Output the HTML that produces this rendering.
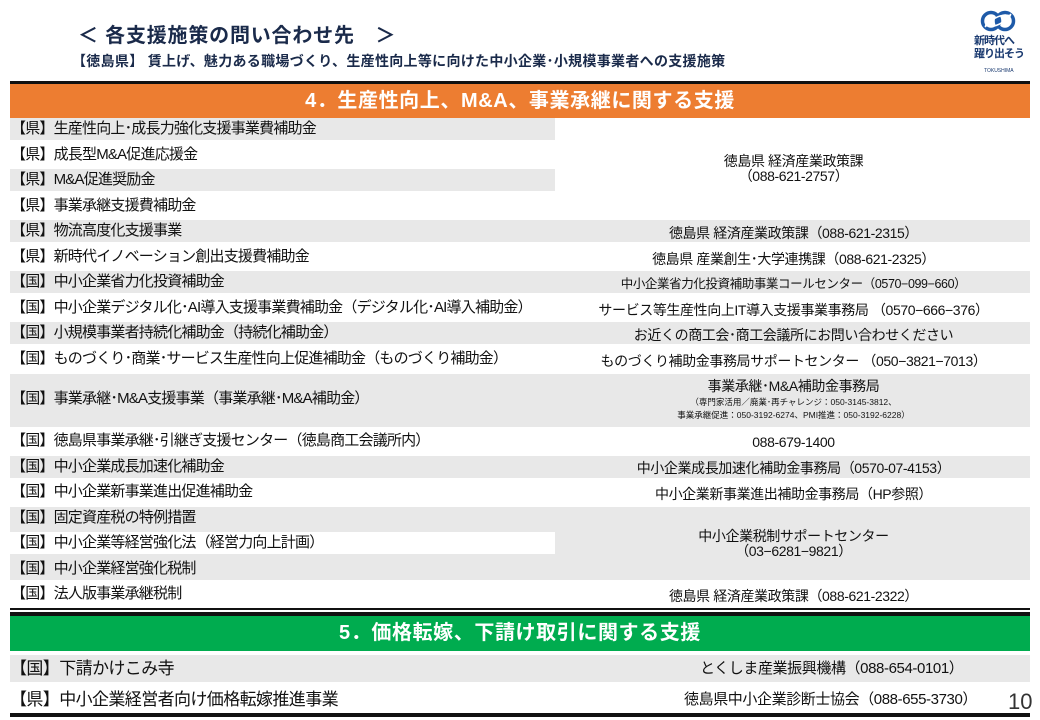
<!DOCTYPE html>
<html><head><meta charset="utf-8"><style>
*{margin:0;padding:0;box-sizing:border-box}
body{width:1040px;height:720px;background:#fff;position:relative;overflow:hidden;font-family:"Liberation Sans","Noto Sans CJK JP",sans-serif;color:#111}
.a{position:absolute}
.r{position:absolute;height:22px;line-height:22px;white-space:nowrap}
.l{left:10px;width:545px;font-size:15px;letter-spacing:-0.8px;padding-left:1px}
.rt{left:557px;width:473px;text-align:center;font-size:14px;letter-spacing:-0.4px}
.g{background:#e8e8e8}
.f{left:10px;width:1020px}
</style></head><body>
<div class="a" style="left:78px;top:19px;font-size:20px;font-weight:bold;color:#1a2a4a;letter-spacing:0.8px">＜ 各支援施策の問い合わせ先　＞</div>
<div class="a" style="left:72px;top:51px;font-size:14px;font-weight:bold;color:#1a2a4a;letter-spacing:0.3px">【徳島県】 賃上げ、魅力ある職場づくり、生産性向上等に向けた中小企業･小規模事業者への支援施策</div>
<svg class="a" style="left:980px;top:8px" width="36" height="26" viewBox="0 0 36 26"><g fill="none" stroke="#1e5aa8" stroke-width="3.5"><circle cx="11" cy="13" r="8.5"/><circle cx="25" cy="13" r="8.5"/></g><path d="M5 19 Q18 4 31 8" stroke="#fff" stroke-width="1.5" fill="none"/><path d="M5 17 Q18 22 31 6" stroke="#fff" stroke-width="1.5" fill="none"/></svg>
<div class="a" style="left:974px;top:35px;font-size:11px;font-weight:bold;color:#1a3a70;line-height:13px;letter-spacing:-1px">新時代へ<br>躍り出そう</div>
<div class="a" style="left:984px;top:68px;font-size:5px;color:#1a3a70">TOKUSHIMA</div>
<div class="a" style="left:10px;top:81px;width:1020px;height:3px;background:#111"></div>
<div class="a" style="left:10px;top:84px;width:1020px;height:34px;background:#ed7d31;color:#fff;font-size:20px;font-weight:bold;text-align:center;line-height:34px;letter-spacing:0.6px">4．生産性向上、M&amp;A、事業承継に関する支援</div>

<div class="r l g" style="top:118px">【県】生産性向上･成長力強化支援事業費補助金</div>
<div class="r l" style="top:143.5px">【県】成長型M&amp;A促進応援金</div>
<div class="r l g" style="top:169px">【県】M&amp;A促進奨励金</div>
<div class="r l" style="top:194.5px">【県】事業承継支援費補助金</div>
<div class="a rt" style="top:154px;font-size:14px;line-height:15px;white-space:nowrap">徳島県 経済産業政策課<br>（088-621-2757）</div>

<div class="r f g" style="top:220px"></div>
<div class="r l" style="top:220px">【県】物流高度化支援事業</div><div class="r rt" style="top:222px">徳島県 経済産業政策課（088-621-2315）</div>
<div class="r l" style="top:245.5px">【県】新時代イノベーション創出支援費補助金</div><div class="r rt" style="top:247.5px">徳島県 産業創生･大学連携課（088-621-2325）</div>
<div class="r f g" style="top:271px"></div>
<div class="r l" style="top:271px">【国】中小企業省力化投資補助金</div><div class="r rt" style="top:273px;font-size:12.5px">中小企業省力化投資補助事業コールセンター（0570−099−660）</div>
<div class="r l" style="top:296.5px">【国】中小企業デジタル化･AI導入支援事業費補助金（デジタル化･AI導入補助金）</div><div class="r rt" style="top:298.5px">サービス等生産性向上IT導入支援事業事務局 （0570−666−376）</div>
<div class="r f g" style="top:322px"></div>
<div class="r l" style="top:322px">【国】小規模事業者持続化補助金（持続化補助金）</div><div class="r rt" style="top:324px">お近くの商工会･商工会議所にお問い合わせください</div>
<div class="r l" style="top:347.5px">【国】ものづくり･商業･サービス生産性向上促進補助金（ものづくり補助金）</div><div class="r rt" style="top:349.5px">ものづくり補助金事務局サポートセンター （050−3821−7013）</div>

<div class="a g" style="left:10px;top:374px;width:1020px;height:53px"></div>
<div class="a l" style="top:388px;line-height:22px;white-space:nowrap">【国】事業承継･M&amp;A支援事業（事業承継･M&amp;A補助金）</div>
<div class="a rt" style="top:378px;white-space:nowrap;line-height:17px">事業承継･M&amp;A補助金事務局</div>
<div class="a rt" style="top:396px;white-space:nowrap;font-size:8.5px;line-height:13px;letter-spacing:0">（専門家活用／廃業･再チャレンジ：050-3145-3812、<br>事業承継促進：050-3192-6274、PMI推進：050-3192-6228）</div>

<div class="r l" style="top:430px">【国】徳島県事業承継･引継ぎ支援センター（徳島商工会議所内）</div><div class="r rt" style="top:431px">088-679-1400</div>
<div class="r f g" style="top:455.5px"></div>
<div class="r l" style="top:455.5px">【国】中小企業成長加速化補助金</div><div class="r rt" style="top:457px">中小企業成長加速化補助金事務局（0570-07-4153）</div>
<div class="r l" style="top:481px">【国】中小企業新事業進出促進補助金</div><div class="r rt" style="top:483px">中小企業新事業進出補助金事務局（HP参照）</div>
<div class="a g" style="left:10px;top:507px;width:1020px;height:73px"></div>
<div class="a" style="left:10px;top:532px;width:545px;height:22px;background:#fff"></div>
<div class="r l" style="top:506.5px">【国】固定資産税の特例措置</div>
<div class="r l" style="top:532px">【国】中小企業等経営強化法（経営力向上計画）</div>
<div class="r l" style="top:557.5px">【国】中小企業経営強化税制</div>
<div class="a rt" style="top:529px;line-height:15px;white-space:nowrap">中小企業税制サポートセンター<br>（03−6281−9821）</div>
<div class="r l" style="top:583px">【国】法人版事業承継税制</div><div class="r rt" style="top:585px">徳島県 経済産業政策課（088-621-2322）</div>

<div class="a" style="left:10px;top:608px;width:1020px;height:1.5px;background:#111"></div>
<div class="a" style="left:10px;top:612px;width:1020px;height:4px;background:#111"></div>
<div class="a" style="left:10px;top:616px;width:1020px;height:35px;background:#00ac4f;color:#fff;font-size:20px;font-weight:bold;text-align:center;line-height:35px;letter-spacing:0.6px">5．価格転嫁、下請け取引に関する支援</div>
<div class="a g" style="left:10px;top:655px;width:1020px;height:27px"></div>
<div class="a" style="left:10px;top:655px;font-size:17px;line-height:27px;letter-spacing:-0.6px">【国】下請かけこみ寺</div>
<div class="a" style="left:700px;top:655px;font-size:15px;line-height:27px;letter-spacing:-0.4px">とくしま産業振興機構（088-654-0101）</div>
<div class="a" style="left:10px;top:686px;font-size:17px;line-height:27px;letter-spacing:-0.6px">【県】中小企業経営者向け価格転嫁推進事業</div>
<div class="a" style="left:684px;top:686px;font-size:15px;line-height:27px;letter-spacing:-0.4px">徳島県中小企業診断士協会（088-655-3730）</div>
<div class="a" style="left:1008px;top:689px;font-size:22px;color:#333">10</div>
<div class="a" style="left:10px;top:713px;width:1020px;height:4px;background:#111"></div>
</body></html>
